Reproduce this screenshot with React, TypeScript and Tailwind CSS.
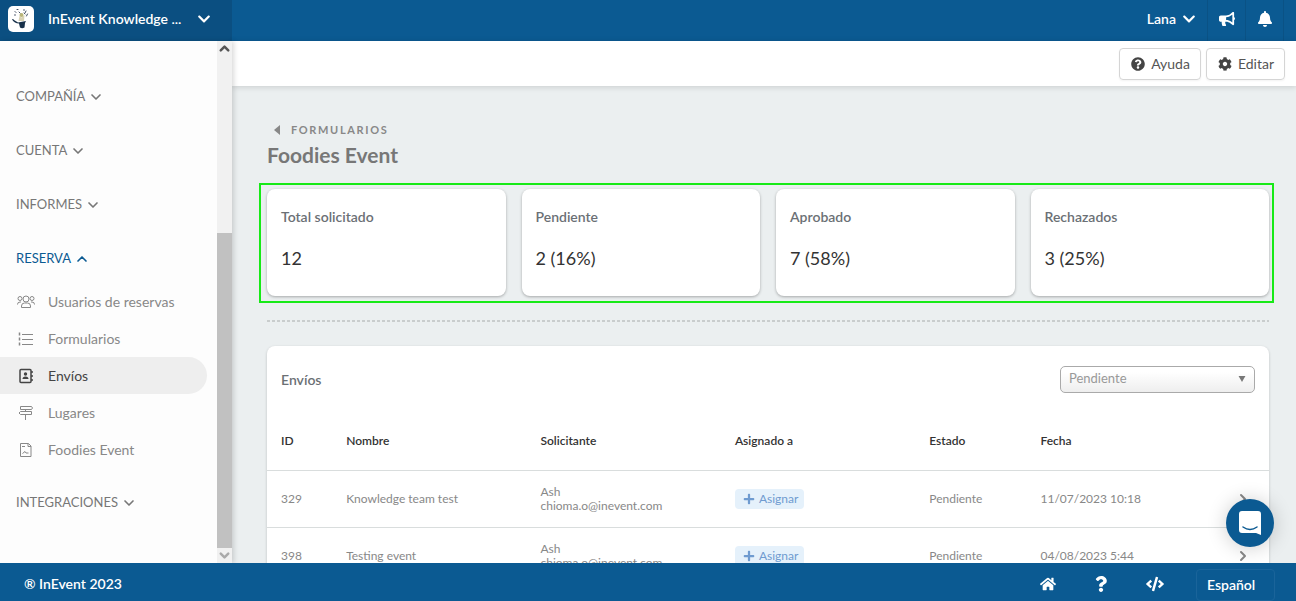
import type { ReactNode } from "react"
import {
  FaBell,
  FaBullhorn,
  FaChevronDown,
  FaCode,
  FaCog,
  FaHome,
  FaPlus,
  FaQuestion,
  FaQuestionCircle,
} from "react-icons/fa"
import { ChevronDown, ChevronRight, ChevronUp } from "lucide-react"

const stats = [
  { label: "Total solicitado", value: "12" },
  { label: "Pendiente", value: "2 (16%)" },
  { label: "Aprobado", value: "7 (58%)" },
  { label: "Rechazados", value: "3 (25%)" },
]

const submissions = [
  { id: 329, name: "Knowledge team test", person: "Ash", email: "chioma.o@inevent.com", status: "Pendiente", date: "11/07/2023 10:18" },
  { id: 398, name: "Testing event", person: "Ash", email: "chioma.o@inevent.com", status: "Pendiente", date: "04/08/2023 5:44" },
]

function LineIcon({ children }: { children: ReactNode }) {
  return (
    <svg viewBox="0 0 18 16" className="h-4 w-5 shrink-0" fill="none" stroke="currentColor" aria-hidden="true">
      {children}
    </svg>
  )
}

function UsersIcon() {
  return (
    <LineIcon>
      <circle cx="9" cy="5" r="3" />
      <circle cx="3" cy="4.5" r="2" />
      <circle cx="15" cy="4.5" r="2" />
      <path d="M4.5 13.5v-1.5q0-3 3-3h3q3 0 3 3v1.5zM.5 10.500q0-2.500 2.500-2.500h1M17.500 10.500q0-2.500-2.500-2.500h-1" />
    </LineIcon>
  )
}

function ListIcon() {
  return (
    <LineIcon>
      <path d="M5 3.500h11M5 8.500h11M5 13.500h11" />
      <path d="M2.500 1.500v4M2.500 6.500v4M2.500 11.500v4" strokeWidth="1.500" strokeDasharray="3 1" />
    </LineIcon>
  )
}

function ContactsIcon() {
  return (
    <LineIcon>
      <rect x="3" y="1.500" width="11" height="13" rx="1" strokeWidth="1.500" />
      <path d="M15 3v2M15 7v2M15 11v2" strokeWidth="1.500" />
      <circle cx="8.500" cy="6" r="1.700" fill="currentColor" stroke="none" />
      <path d="M5.500 11q0-2.500 3-2.500t3 2.500z" fill="currentColor" stroke="none" />
    </LineIcon>
  )
}

function SignpostIcon() {
  return (
    <LineIcon>
      <path d="M3.500 1.500h11l1 1.500-1 1.500h-11zM14.500 6.500h-11l-1.500 1.500 1.500 1.500h11zM8.500 4.500v2M8.500 9.500v5.500" />
    </LineIcon>
  )
}

function FileIcon() {
  return (
    <LineIcon>
      <path d="M3.500 1.500h8l2.500 2.500v10.500h-10.500zM11 1.500v3h3M5 4.500h3" />
      <path d="M5.500 11.500l2.500-2 1 1.500h2.500" />
    </LineIcon>
  )
}

function Logo() {
  return (
    <svg viewBox="0 0 26 26" className="size-[26px] shrink-0" aria-hidden="true">
      <rect width="26" height="26" rx="5" fill="#fff" />
      <path d="M10.500 15l1-5 2 1.500 3-2.500-.500 6z" fill="#d8d2b4" />
      <circle cx="13.500" cy="9" r="2" fill="#b9b578" />
      <path d="M4 13.500q1-1 2 .500l4 2.500 8-1.500-1 2-.500 4.500q-2.500 1.500-4.500 0l-1-4q-4.500 0-7-4z" fill="#173049" />
      <path d="M7 5.500l1 1M9 3.500h1M18 5l-1 2M19.500 8l-1 2M6.500 9h1M16 3.500v1M11 6l1 1M16 7l1 1" stroke="#445064" strokeLinecap="round" />
    </svg>
  )
}

function NavGroup({ title, open, children }: { title: string; open?: boolean; children?: ReactNode }) {
  const Chevron = open ? ChevronUp : ChevronDown
  return (
    <div className="mb-1.5">
      <button type="button" className={`flex h-12 items-center gap-[3px] pl-4 text-[13px] ${open ? "text-[#0b5a92]" : "text-[#777]"}`}>
        {title}
        <Chevron className="size-4" strokeWidth={2.5} />
      </button>
      {children}
    </div>
  )
}

function NavItem({ icon, label, active }: { icon: ReactNode; label: string; active?: boolean }) {
  return (
    <li>
      <a
        href="#"
        className={`mr-2.5 flex h-[37px] items-center gap-3 rounded-r-full pl-4 text-sm ${
          active ? "bg-[#eee] text-[#444]" : "text-[#888]"
        }`}
      >
        {icon}
        {label}
      </a>
    </li>
  )
}

function Sidebar() {
  return (
    <aside className="z-10 flex w-[232px] shrink-0 bg-[#fdfdfd] shadow-[2px_0_5px_rgba(0,0,0,0.15)]">
      <nav className="flex-1 pt-8">
        <NavGroup title="COMPAÑÍA" />
        <NavGroup title="CUENTA" />
        <NavGroup title="INFORMES" />
        <NavGroup title="RESERVA" open>
          <ul className="pb-[5px]">
            <NavItem icon={<UsersIcon />} label="Usuarios de reservas" />
            <NavItem icon={<ListIcon />} label="Formularios" />
            <NavItem icon={<ContactsIcon />} label="Envíos" active />
            <NavItem icon={<SignpostIcon />} label="Lugares" />
            <NavItem icon={<FileIcon />} label="Foodies Event" />
          </ul>
        </NavGroup>
        <NavGroup title="INTEGRACIONES" />
      </nav>
      <div className="flex w-[15px] flex-col items-center bg-[#f1f1f1]">
        <ChevronUp className="size-[15px] text-[#555]" strokeWidth={4} />
        <div className="flex w-full flex-1 flex-col justify-end">
          <div className="h-[64%] bg-[#c1c1c1]" />
        </div>
        <ChevronDown className="size-[15px] text-[#aaa]" strokeWidth={4} />
      </div>
    </aside>
  )
}

function TopBar() {
  return (
    <header className="flex h-[41px] shrink-0 bg-[#0b5a92] text-sm font-semibold text-white">
      <button type="button" className="flex w-[232px] items-center bg-[#0b4f81] pb-1 pl-2">
        <Logo />
        <span className="ml-3.5">InEvent Knowledge ...</span>
        <FaChevronDown className="ml-4 size-3.5" />
      </button>
      <div className="ml-auto flex pr-3">
        <button type="button" className="flex items-center gap-1.5 pr-[11px] pb-1">
          Lana
          <FaChevronDown className="size-3.5" />
        </button>
        <button type="button" aria-label="Anuncios" className="flex w-[38px] items-center justify-center border-l border-[#0a5285] pb-1">
          <FaBullhorn className="size-4" />
        </button>
        <button type="button" aria-label="Notificaciones" className="flex w-[39px] items-center justify-center border-x border-[#0a5285] pb-1">
          <FaBell className="size-4" />
        </button>
      </div>
    </header>
  )
}

function StatCard({ label, value }: { label: string; value: string }) {
  return (
    <div className="rounded-lg bg-white px-3.5 pt-[18px] pb-[26px] shadow-[0_1px_3px_rgba(0,0,0,0.3)]">
      <h2 className="text-sm leading-5 font-semibold text-[#6b7075]">{label}</h2>
      <p className="mt-[19px] text-lg leading-6 text-[#333]">{value}</p>
    </div>
  )
}

function SubmissionsTable() {
  return (
    <table className="w-full table-fixed text-left text-xs leading-[14px] text-[#888]">
      <colgroup>
        <col className="w-[6.5%]" />
        <col className="w-[19.4%]" />
        <col className="w-[19.4%]" />
        <col className="w-[19.4%]" />
        <col className="w-[11.1%]" />
        <col />
        <col className="w-[8%]" />
      </colgroup>
      <thead>
        <tr className="h-[57px] border-b border-[#d9dddd] text-[#333]">
          <th className="pl-3.5 font-semibold">ID</th>
          <th className="pl-3.5 font-semibold">Nombre</th>
          <th className="pl-3.5 font-semibold">Solicitante</th>
          <th className="pl-3.5 font-semibold">Asignado a</th>
          <th className="pl-3.5 font-semibold">Estado</th>
          <th className="pl-3.5 font-semibold">Fecha</th>
          <td />
        </tr>
      </thead>
      <tbody>
        {submissions.map((row) => (
          <tr key={row.id} className="h-[57px] border-b border-[#d9dddd]">
            <td className="pl-3.5">{row.id}</td>
            <td className="pl-3.5">{row.name}</td>
            <td className="pl-3.5">
              {row.person}
              <br />
              {row.email}
            </td>
            <td className="pl-3.5">
              <button type="button" className="flex h-5 items-center gap-1 rounded bg-[#e5f1fb] pr-1.5 pl-2 text-[#6f9bd0]">
                <FaPlus className="size-3" />
                Asignar
              </button>
            </td>
            <td className="pl-3.5">{row.status}</td>
            <td className="pl-3.5">{row.date}</td>
            <td className="pr-[18px]">
              <ChevronRight className="ml-auto size-4" strokeWidth={3} />
            </td>
          </tr>
        ))}
      </tbody>
    </table>
  )
}

export default function App() {
  return (
    <div className="relative flex h-screen flex-col overflow-hidden bg-[#ebeff0] font-['Lato',sans-serif]">
      <TopBar />
      <div className="flex min-h-0 flex-1">
        <Sidebar />
        <div className="flex min-w-0 flex-1 flex-col">
          <div className="flex h-[45px] shrink-0 items-center justify-end gap-[5px] bg-white pr-[11px] text-sm text-[#555] shadow-[0_1px_6px_rgba(0,0,0,0.15)]">
            <button type="button" className="flex h-8 items-center gap-1.5 rounded border border-[#d5d5d5] pr-2.5 pl-[11px] shadow-xs">
              <FaQuestionCircle className="size-3.5 text-[#444]" />
              Ayuda
            </button>
            <button type="button" className="flex h-8 items-center gap-1.5 rounded border border-[#d5d5d5] pr-2.5 pl-[11px] shadow-xs">
              <FaCog className="size-3.5 text-[#444]" />
              Editar
            </button>
          </div>
          <main className="min-h-0 flex-1 overflow-hidden pt-9 pr-[27px] pl-[35px]">
            <a href="#" className="flex h-4 items-center gap-2.5 pl-1.5 text-[11px] font-bold tracking-[0.15em] text-[#888]">
              <svg viewBox="0 0 6 10" className="h-2.5 w-2" fill="currentColor" aria-hidden="true">
                <path d="M6 0v10L0 5z" />
              </svg>
              FORMULARIOS
            </a>
            <h1 className="mt-[3px] text-[21px] leading-7 font-bold text-[#777]">Foodies Event</h1>
            <section className="mt-3.5 -mr-[5px] -ml-2 grid grid-cols-4 gap-4 border-2 border-[#17ea17] pt-1 pr-[3px] pb-[5px] pl-1.5">
              {stats.map((stat) => (
                <StatCard key={stat.label} {...stat} />
              ))}
            </section>
            <div className="mt-[17px] h-0.5 bg-[repeating-linear-gradient(90deg,#c9cdcd_0_3px,transparent_3px_5px)]" />
            <section className="mt-6 rounded-lg bg-white shadow-[0_1px_3px_rgba(0,0,0,0.2)]">
              <div className="flex h-[67px] items-center justify-between px-3.5">
                <h2 className="text-sm font-semibold text-[#6b7075]">Envíos</h2>
                <div className="relative">
                  <select
                    aria-label="Estado"
                    className="block h-[27px] w-[195px] appearance-none rounded-[5px] border border-[#aaa] bg-linear-to-b from-white from-20% to-[#eee] pb-0.5 pl-2 text-[13px] text-[#999]"
                  >
                    <option>Pendiente</option>
                  </select>
                  <svg viewBox="0 0 8 7" className="pointer-events-none absolute top-2.5 right-[9px] h-1.5 w-2 fill-[#777]" aria-hidden="true">
                    <path d="M0 0h8L4 7z" />
                  </svg>
                </div>
              </div>
              <SubmissionsTable />
            </section>
          </main>
        </div>
      </div>
      <footer className="z-20 flex h-[38px] shrink-0 items-center bg-[#0b5a92] pt-1 pr-[21px] pl-6 text-sm font-semibold text-white">
        <span className="mr-auto">® InEvent 2023</span>
        <a href="#" aria-label="Inicio" className="mr-[37px]">
          <FaHome className="size-4" />
        </a>
        <a href="#" aria-label="Ayuda" className="mr-[37px]">
          <FaQuestion className="size-4" />
        </a>
        <a href="#" aria-label="Código" className="mr-8">
          <FaCode className="size-[18px]" />
        </a>
        <select aria-label="Idioma" className="mt-0.5 h-8 w-[79px] appearance-none rounded border border-[#1a649a] bg-transparent pl-2.5">
          <option>Español</option>
        </select>
      </footer>
      <button
        type="button"
        aria-label="Abrir chat"
        className="absolute right-[22px] bottom-[54px] z-30 flex size-12 items-center justify-center rounded-full bg-[#0b5a92] shadow-[0_1px_20px_rgba(0,0,0,0.2)]"
      >
        <svg viewBox="0 0 22 24" className="h-6 w-[22px]" aria-hidden="true">
          <path d="M3 0h16q3 0 3 3v21l-5-2H3q-3 0-3-3V3q0-3 3-3z" fill="#fff" />
          <path d="M4 16q7 5 14 0" fill="none" stroke="#0b5a92" strokeWidth="1.500" strokeLinecap="round" />
        </svg>
      </button>
    </div>
  )
}
